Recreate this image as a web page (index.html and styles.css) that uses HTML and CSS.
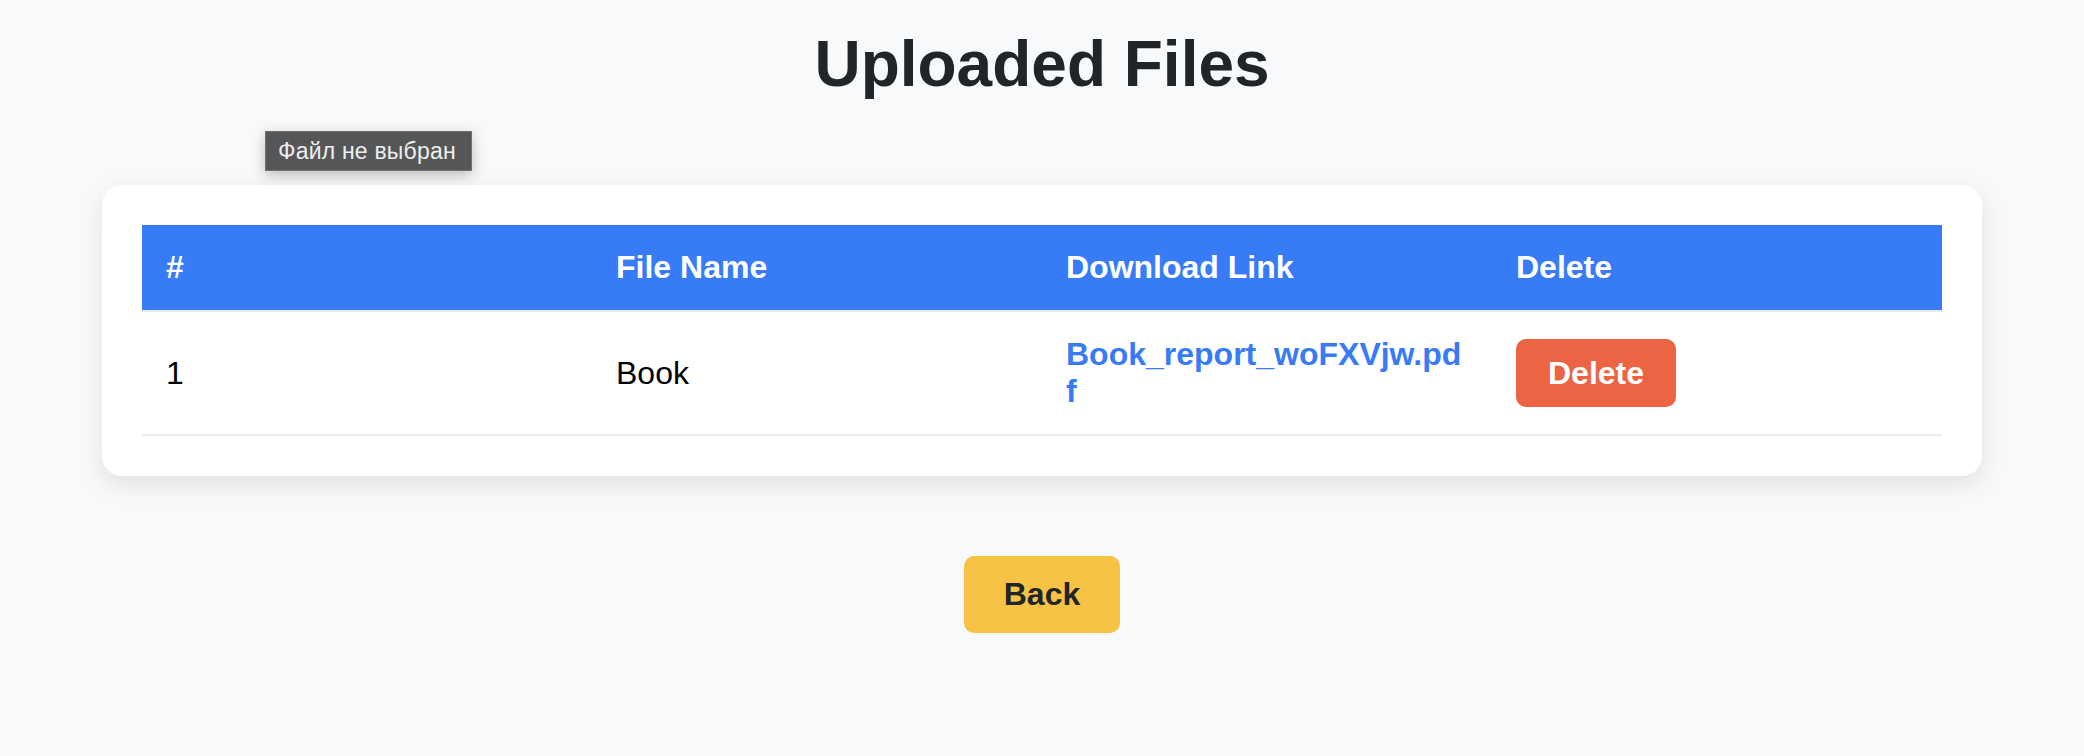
FILE: index.html
```html
<!DOCTYPE html>
<html lang="en">
<head>
<meta charset="utf-8">
<title>Uploaded Files</title>
<link rel="stylesheet" href="styles.css">
</head>
<body>
<div class="page">
  <h1 class="title">Uploaded Files</h1>
  <div class="card">
    <table class="files">
      <thead>
        <tr>
          <th>#</th>
          <th>File Name</th>
          <th>Download Link</th>
          <th>Delete</th>
        </tr>
      </thead>
      <tbody>
        <tr>
          <td>1</td>
          <td>Book</td>
          <td><a class="link" href="#">Book_report_woFXVjw.pdf</a></td>
          <td><button class="btn-delete" type="button">Delete</button></td>
        </tr>
      </tbody>
    </table>
  </div>
  <div class="actions">
    <a class="btn-back" href="#">Back</a>
  </div>
</div>
<div class="tooltip">Файл не выбран</div>
</body>
</html>
```
FILE: styles.css
```css
html, body {
  margin: 0;
  padding: 0;
}

body {
  background: #f8f9fa;
  font-family: "Liberation Sans", Arial, sans-serif;
  color: #212529;
  position: relative;
  min-height: 756px;
}

.page {
  padding: 27px 102px 40px;
}

.title {
  margin: 0 0 84px;
  font-size: 64px;
  font-weight: bold;
  line-height: normal;
  text-align: center;
  color: #212529;
}

.card {
  background: #ffffff;
  border-radius: 20px;
  padding: 40px;
  box-shadow: 0 8px 24px rgba(0, 0, 0, 0.1);
}

.files {
  width: 100%;
  border-collapse: collapse;
  table-layout: fixed;
  font-size: 32px;
}

.files th {
  background: #387bf6;
  color: #ffffff;
  font-weight: bold;
  text-align: left;
  padding: 24px;
  line-height: 37px;
  border-bottom: 2px solid #e9eaee;
}

.files td {
  padding: 24px;
  line-height: 37px;
  color: #000000;
  border-bottom: 2px solid #e9eaee;
  vertical-align: middle;
  word-break: break-all;
}

.link {
  color: #387bf6;
  font-weight: bold;
  text-decoration: none;
}

.btn-delete {
  display: inline-block;
  vertical-align: middle;
  background: #ec6443;
  color: #ffffff;
  font-family: "Liberation Sans", Arial, sans-serif;
  font-size: 32px;
  font-weight: bold;
  line-height: 36px;
  padding: 16px 32px;
  border: none;
  border-radius: 10px;
}

.actions {
  margin-top: 80px;
  text-align: center;
}

.btn-back {
  display: inline-block;
  background: #f6c344;
  color: #212529;
  font-size: 32px;
  font-weight: bold;
  line-height: 37px;
  padding: 20px 40px;
  border-radius: 10px;
  text-decoration: none;
}

.tooltip {
  position: absolute;
  left: 265px;
  top: 131px;
  background: #555657;
  border: 1px solid #707172;
  color: #eeeeee;
  font-size: 23px;
  letter-spacing: 0.2px;
  line-height: 26px;
  padding: 6px 15px 6px 12px;
  box-shadow: 0 4px 14px rgba(0, 0, 0, 0.25);
  white-space: nowrap;
}
```
